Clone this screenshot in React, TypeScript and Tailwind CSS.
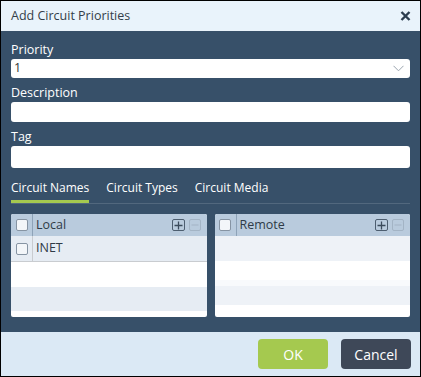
import React from "react";

function Check() {
  return <span className="block w-[12px] h-[12px] rounded-[2px] border border-[#8694a3] bg-[#f3f6f9]" />;
}

function PlusMinus() {
  return (
    <div className="flex items-center gap-[4px]">
      <span className="w-[13px] h-[12px] rounded-[2px] border border-[#4d5e70] flex items-center justify-center">
        <svg width="9" height="9" viewBox="0 0 9 9">
          <path d="M4.5 0.5V8.5M0.5 4.5H8.5" stroke="#3b4b5c" strokeWidth="1.3" />
        </svg>
      </span>
      <span className="w-[12px] h-[12px] rounded-[2px] border border-[#a3b4c5] flex items-center justify-center">
        <svg width="8" height="8" viewBox="0 0 8 8">
          <path d="M0.5 4H7.5" stroke="#a3b4c5" strokeWidth="1.2" />
        </svg>
      </span>
    </div>
  );
}

function Panel({ title, rows, left }: { title: string; rows: string[]; left: boolean }) {
  return (
    <div className="h-[103px] bg-white rounded-[2px] overflow-hidden flex flex-col">
      <div className="h-[22px] bg-[#b9cbdd] flex items-center shrink-0">
        <div className="w-[22px] h-full flex items-center justify-center border-r border-[#8ea3b8]">
          <Check />
        </div>
        <span className="flex-1 pl-[3px] text-[12.5px] text-[#2f3b47]">{title}</span>
        <div className="pr-[6px]">
          <PlusMinus />
        </div>
      </div>
      {left ? (
        <>
          <div className="h-[26px] bg-[#e6ecf3] border-b border-[#c9ccd0] flex items-center shrink-0">
            <div className="w-[22px] h-full flex items-center justify-center border-r border-[#c9ccd0]">
              <Check />
            </div>
            <span className="pl-[3px] text-[12.5px] text-[#2f3b47]">{rows[0]}</span>
          </div>
          <div className="h-[25px] bg-white shrink-0" />
          <div className="h-[24px] bg-[#e6ecf3] shrink-0" />
        </>
      ) : (
        <>
          <div className="h-[25px] bg-[#eef2f7] shrink-0" />
          <div className="h-[19px] bg-white shrink-0" />
          <div className="h-[6px] bg-[#f8fafc] shrink-0" />
          <div className="h-[19px] bg-[#eef2f7] shrink-0" />
        </>
      )}
    </div>
  );
}

export default function App() {
  return (
    <div className="w-[421px] h-[377px] border border-black flex flex-col font-['Open_Sans',sans-serif]">
      {/* Title bar */}
      <div className="h-[30px] bg-[#e9f3fb] flex items-center justify-between pl-[10px] pr-[9px] shrink-0">
        <span className="text-[12.5px] text-[#333e49]">Add Circuit Priorities</span>
        <svg width="11" height="10" viewBox="0 0 11 10">
          <path d="M1.5 1L9.5 9M9.5 1L1.5 9" stroke="#2c3d4f" strokeWidth="2.4" />
        </svg>
      </div>

      {/* Body */}
      <div className="flex-1 bg-[#375069] px-[10px] pt-[10px] flex flex-col">
        <label className="h-[18px] leading-[18px] text-[12.5px] text-white">Priority</label>
        <div className="h-[19px] bg-white rounded-[3px] flex items-center justify-between pl-[3px] pr-[6px]">
          <span className="text-[12.5px] text-[#333]">1</span>
          <svg width="11" height="7" viewBox="0 0 11 7">
            <path d="M0.5 0.8L5.5 5.8L10.5 0.8" stroke="#9aa4ae" strokeWidth="1" fill="none" />
          </svg>
        </div>
        <label className="mt-[6px] h-[18px] leading-[18px] text-[12.5px] text-white">Description</label>
        <div className="h-[20px] bg-white rounded-[3px]" />
        <label className="mt-[6px] h-[18px] leading-[18px] text-[12.5px] text-white">Tag</label>
        <div className="h-[22px] bg-white rounded-[3px]" />

        {/* Tabs */}
        <div className="mt-[11px] flex gap-[17px] border-b border-[#52687e]">
          <div className="h-[24px] leading-[18px] text-[12px] text-white border-b-[3px] border-[#a5c94f]">Circuit Names</div>
          <div className="h-[24px] leading-[18px] text-[12px] text-white">Circuit Types</div>
          <div className="h-[24px] leading-[18px] text-[12px] text-white">Circuit Media</div>
        </div>

        {/* Panels */}
        <div className="mt-[10px] grid grid-cols-2 gap-[8px]">
          <Panel title="Local" rows={["INET"]} left />
          <Panel title="Remote" rows={[]} left={false} />
        </div>
      </div>

      {/* Footer */}
      <div className="h-[44px] bg-[#dbe9f5] flex items-center justify-end gap-[13px] pr-[9px] shrink-0">
        <button className="w-[70px] h-[30px] rounded-[4px] bg-[#a5c94f] text-white text-[14px]">OK</button>
        <button className="w-[70px] h-[30px] rounded-[4px] bg-[#3e4858] text-white text-[14px]">Cancel</button>
      </div>
    </div>
  );
}
